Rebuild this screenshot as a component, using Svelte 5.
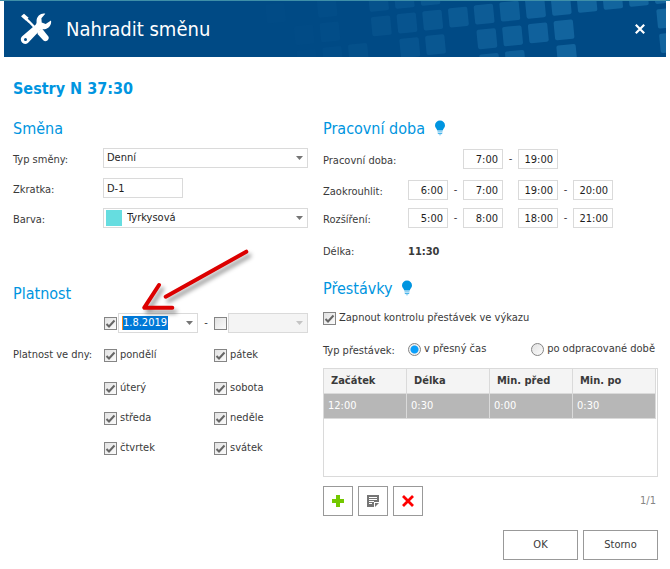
<script>
  const tileCells = [
    [-5, -1], [-3, -1], [-1, -1], [0, -1], [1, -1],
    [-4, 0], [-3, 0], [-1, 0], [0, 0], [1, 0], [2, 0], [3, 0], [4, 0],
    [5, 0], [6, 0], [7, 0], [8, 0], [9, 0], [10, 0],
    [-4, 1], [-3, 1], [-2, 1], [0, 1], [1, 1], [3, 1], [4, 1], [5, 1], [6, 1], [10, 1],
    [3, 2], [4, 2], [6, 2], [10, 2]
  ];
  const tiles = tileCells.map(([i, j]) => ({
    x: 403 + 25.7 * i + 2.8 * j,
    y: 22 - 2.95 * i + 24.6 * j,
    o: Math.min(0.42, Math.max(0.03, 0.17 + i * 0.04))
  }));

  const hours = [
    { label: 'Pracovní doba:', values: [null, '7:00', '19:00', null], dashes: [1] },
    { label: 'Zaokrouhlit:', values: ['6:00', '7:00', '19:00', '20:00'], dashes: [0, 2] },
    { label: 'Rozšíření:', values: ['5:00', '8:00', '18:00', '21:00'], dashes: [0, 2] }
  ];
  const days = ['pondělí', 'pátek', 'úterý', 'sobota', 'středa', 'neděle', 'čtvrtek', 'svátek'];
</script>

{#snippet bulb()}
  <svg class="bulb" width="12" height="16" viewBox="0 0 12 16" aria-hidden="true">
    <path d="M6 .5a5 5 0 0 0-5 5c0 2.300 1.800 3 2.300 5h5.400c.5-2 2.300-2.700 2.300-5a5 5 0 0 0-5-5z" fill="#0095e0" />
    <path d="M3.500 11.900h5M3.800 13.500h4.400" stroke="#4db5ea" stroke-width="1" />
    <path d="M4.500 14.600h3L6 15.600z" fill="#4db5ea" />
  </svg>
{/snippet}

<div class="dialog">
  <header>
    <svg class="tiles" width="662" height="56" aria-hidden="true">
      {#each tiles as t}
        <rect x="-9.700" y="-9.700" width="19.400" height="19.400" rx="2" fill="#2c8bc2" fill-opacity={t.o}
          transform="translate({t.x} {t.y}) rotate(-5.500)" />
      {/each}
    </svg>
    <svg class="tools" width="32" height="32" viewBox="0 0 32 32" aria-hidden="true">
      <path d="M3 3l6.500 6 14.500 15" stroke="#fff" stroke-width="2.400" fill="none" />
      <path d="M1 3.300l3-2.600 4.600 4-2.700 2.900z" fill="#fff" />
      <path d="M18 18.500l4-3 6.200 7.800c2 2.800-2 6.300-4.700 4.200l-6-6.500z" fill="#fff" />
      <path d="M25.300.7c-4.300-1-9.300 2.500-8.700 8.300.1 1.200-.3 2-1 2.800L2.200 23.200c-3.800 3.600.9 10.100 5.700 6.800L20 17.200c.8-.8 1.700-1.100 2.800-1 5 .4 9.200-3.900 8.200-8.700l-5.300 3.500-4-1.600-.3-4.200z" fill="#fff" />
      <circle cx="5.500" cy="26.600" r="1.500" fill="#004a85" />
    </svg>
    <h1>Nahradit směnu</h1>
    <button class="close" aria-label="Zavřít">
      <svg width="10" height="10" viewBox="0 0 10 10"><path d="M.8.8l8.400 8.400M9.200.8L.8 9.200" stroke="#fff" stroke-width="2.200" /></svg>
    </button>
  </header>

  <main>
    <h2 class="group">Sestry N 37:30</h2>
    <div class="columns">
      <div class="column">
        <section class="shift">
          <h2>Směna</h2>
          <div class="row">
            <label for="type">Typ směny:</label>
            <select id="type" class="grow"><option>Denní</option></select>
          </div>
          <div class="row">
            <label for="code">Zkratka:</label>
            <input id="code" class="code" type="text" value="D-1" />
          </div>
          <div class="row">
            <label for="color">Barva:</label>
            <div class="swatched grow">
              <select id="color"><option>Tyrkysová</option></select>
              <span class="swatch"></span>
            </div>
          </div>
        </section>

        <section class="validity">
          <h2>Platnost</h2>
          <div class="range">
            <input type="checkbox" checked aria-label="Platnost od" />
            <div class="date">
              <input type="text" value="1.8.2019" aria-label="Datum od" />
              <button aria-label="Otevřít kalendář"></button>
            </div>
            <span class="dash">-</span>
            <input type="checkbox" aria-label="Platnost do" />
            <select class="until" disabled aria-label="Datum do"><option></option></select>
          </div>
          <div class="dayrow">
            <span class="label">Platnost ve dny:</span>
            <div class="days">
              {#each days as day}
                <label class="check"><input type="checkbox" checked />{day}</label>
              {/each}
            </div>
          </div>
          <svg class="arrow" width="130" height="80" viewBox="130 240 130 80" aria-hidden="true">
            <g fill="none" stroke="#dc0000" stroke-width="4" stroke-linecap="round" stroke-linejoin="round">
              <path d="M246.300 251.700L165.700 296.700M159 285L144.300 307.700H172.300" />
            </g>
          </svg>
        </section>
      </div>

      <div class="column">
        <section class="hours">
          <h2>Pracovní doba {@render bulb()}</h2>
          {#each hours as line}
            <div class="row">
              <span class="label">{line.label}</span>
              <div class="times">
                {#each line.values as value, i}
                  {#if value}
                    <input type="text" {value} aria-label="{line.label} {i + 1}" />
                  {:else}
                    <span></span>
                  {/if}
                  {#if i < 3}<span class="dash">{line.dashes.includes(i) ? '-' : ''}</span>{/if}
                {/each}
              </div>
            </div>
          {/each}
          <div class="row total"><span class="label">Délka:</span><strong>11:30</strong></div>
        </section>

        <section class="breaks">
          <h2>Přestávky {@render bulb()}</h2>
          <label class="check control"><input type="checkbox" checked />Zapnout kontrolu přestávek ve výkazu</label>
          <div class="row kind">
            <span class="label">Typ přestávek:</span>
            <label class="radio"><input type="radio" name="kind" checked />v přesný čas</label>
            <label class="radio"><input type="radio" name="kind" />po odpracované době</label>
          </div>
          <div class="grid">
            <table>
              <thead><tr><th>Začátek</th><th>Délka</th><th>Min. před</th><th>Min. po</th></tr></thead>
              <tbody><tr><td>12:00</td><td>0:30</td><td>0:00</td><td>0:30</td></tr></tbody>
            </table>
          </div>
          <div class="toolbar">
            <button aria-label="Přidat">
              <svg width="12" height="12" viewBox="0 0 12 12"><path d="M4 0h4v4h4v4H8v4H4V8H0V4h4z" fill="#73c800" /></svg>
            </button>
            <button aria-label="Upravit">
              <svg width="12" height="12" viewBox="0 0 12 12">
                <path d="M0 0h12v7H7v5H0z" fill="#757575" /><path d="M8 8h4l-4 4z" fill="#757575" />
                <path d="M2 2.500h8M2 4.500h8M2 6.500h5M2 8.500h3" stroke="#fff" />
              </svg>
            </button>
            <button aria-label="Smazat">
              <svg width="12" height="12" viewBox="0 0 12 12"><path d="M1 1l10 10M11 1L1 11" stroke="#f00" stroke-width="2.800" /></svg>
            </button>
            <span class="count">1/1</span>
          </div>
        </section>
      </div>
    </div>
    <footer><button>OK</button><button>Storno</button></footer>
  </main>
</div>

<style>
  :global(body) { margin: 0; background: #fff; }
  .dialog, input, select, button {
    font-family: "DejaVu Sans Condensed", Tahoma, "Noto Sans", sans-serif;
    font-size: 11px;
    line-height: 14px;
    color: #3a3a3a;
  }
  .dialog { border-top: 1px solid #3e8fa8; }
  .dialog :global(*), input, select, button { box-sizing: border-box; }
  input, select { margin: 0; color: #1e1e1e; border: 1px solid #dadada; border-radius: 0; background-color: #fff; height: 20px; padding: 0 3px; }
  button { background: #fff; padding: 0; border: 1px solid #999; display: flex; align-items: center; justify-content: center; }

  header {
    position: relative; overflow: hidden; height: 56px; margin: 0 4px; padding: 0 19px 0 16px;
    background: #004a85; display: flex; align-items: center;
  }
  .tiles { position: absolute; right: 0; top: 0; }
  .tools { position: relative; flex: none; }
  h1 { position: relative; margin: 0 0 0 14px; font-size: 20px; line-height: 24px; font-weight: 400; color: #fff; }
  .close { position: relative; margin-left: auto; width: 14px; height: 14px; border: 0; background: none; }

  main { padding: 21px 12px 0 13px; }
  h2 { margin: 0; padding-top: 2px; font-size: 16px; line-height: 18px; font-weight: 400; color: #0095e0; }
  .group { padding: 0; line-height: 22px; font-weight: 700; }
  .columns { display: grid; grid-template-columns: 295fr 335fr; gap: 15px; margin-top: 18px; }
  .row { display: flex; align-items: center; height: 20px; }
  .row > label:first-child, .label { flex: none; width: 90px; }
  .row > label:first-child, .row > .label, strong { padding-top: 3px; }
  .grow { flex: 1; min-width: 0; }
  .shift .row { margin-top: 10px; }
  select {
    appearance: none; padding-right: 16px;
    background-image: url("data:image/svg+xml,%3Csvg xmlns='http://www.w3.org/2000/svg' width='7' height='4'%3E%3Cpath d='M0 0h7L3.500 4z' fill='%23757575'/%3E%3C/svg%3E");
    background-repeat: no-repeat; background-position: right 4px center;
  }
  select:disabled { opacity: 1; background-color: #f4f4f4; background-image: url("data:image/svg+xml,%3Csvg xmlns='http://www.w3.org/2000/svg' width='7' height='4'%3E%3Cpath d='M0 0h7L3.500 4z' fill='%23c4c4c4'/%3E%3C/svg%3E"); }
  .code { width: 80px; }
  .swatched { position: relative; display: flex; }
  .swatched select { width: 100%; padding-left: 23px; }
  .swatch { position: absolute; left: 3px; top: 2px; width: 16px; height: 16px; background: #66dde0; }

  .validity { position: relative; margin-top: 55px; }
  .range { display: flex; align-items: center; margin: 10px 0 0 91px; }
  input[type="checkbox"], input[type="radio"] {
    appearance: none; flex: none; width: 13px; height: 13px; padding: 0; border: 1px solid #858585;
    background: linear-gradient(135deg, #e2e2e2, #fbfbfb);
  }
  input[type="checkbox"]:checked {
    background: url("data:image/svg+xml,%3Csvg xmlns='http://www.w3.org/2000/svg' width='11' height='11'%3E%3Cpath d='M1.500 6l2.500 2.500L9.500 2.500' fill='none' stroke='%23666' stroke-width='2'/%3E%3C/svg%3E") center no-repeat, linear-gradient(135deg, #e2e2e2, #fbfbfb);
  }
  .date { display: flex; align-items: center; flex: none; width: 80px; height: 20px; margin-left: 1px; padding-left: 3px; border: 1px solid #dadada; }
  .date input { width: 46px; height: 14px; padding: 0; border: 0; border-left: 1px solid #ff8a1e; background: #0078d7; color: #fff; }
  .date button {
    margin-left: auto; width: 15px; height: 18px; border: 0;
    background: url("data:image/svg+xml,%3Csvg xmlns='http://www.w3.org/2000/svg' width='7' height='4'%3E%3Cpath d='M0 0h7L3.500 4z' fill='%23757575'/%3E%3C/svg%3E") center no-repeat;
  }
  .dash { width: 16px; text-align: center; }
  .until { flex: 1; margin-left: 1px; }
  .dayrow { display: flex; margin-top: 12px; line-height: 20px; }
  .days { flex: 1; display: grid; grid-template-columns: 110px 1fr; grid-template-rows: 23px; row-gap: 10px; padding-left: 1px; }
  .check, .radio { display: flex; align-items: center; gap: 3px; height: 20px; }
  .arrow { position: absolute; left: 117px; top: -43px; overflow: visible; filter: drop-shadow(3px 4px 2px rgba(0, 0, 0, 0.4)); }

  .bulb { margin-left: 4px; vertical-align: -2px; }
  .hours .row { margin-top: 11px; }
  .hours .row:nth-child(4) { margin-top: 8px; }
  .hours .total { margin-top: 12px; }
  .hours .label, .breaks .label { width: 85px; }
  .times { display: grid; grid-template-columns: 40px 15px 40px 15px 40px 15px 40px; align-items: center; }
  .times input { width: 40px; padding: 0 4px; text-align: right; }
  .times .dash { width: 15px; }
  strong { font-size: 11px; }
  .breaks { margin-top: 18px; }
  .control { margin-top: 10px; }
  .kind { margin-top: 11px; }
  .radio + .radio { margin-left: auto; margin-right: 3px; }
  .breaks .radio input { border-radius: 50%; }
  .radio input:checked { background: radial-gradient(circle, #0a9ffa 0 3.500px, #f2f2f2 4.500px); }
  .grid { height: 109px; margin-top: 9px; border: 1px solid #dadada; }
  table { width: calc(100% - 1px); table-layout: fixed; border-collapse: separate; border-spacing: 0; }
  th, td { height: 25px; text-align: left; border-right: 1px solid #dadada; border-bottom: 1px solid #dadada; }
  th { padding: 0 7px; background: #f4f4f4; }
  td { padding: 0 4px; background: #b7b7b7; color: #fff; }
  .toolbar { display: flex; align-items: center; gap: 5px; margin-top: 9px; }
  .toolbar button { width: 30px; height: 30px; }
  .count { margin-left: auto; padding-right: 2px; color: #858585; }
  footer { display: flex; justify-content: flex-end; gap: 5px; margin-top: 14px; padding-bottom: 9px; }
  footer button { width: 75px; height: 30px; }
</style>
